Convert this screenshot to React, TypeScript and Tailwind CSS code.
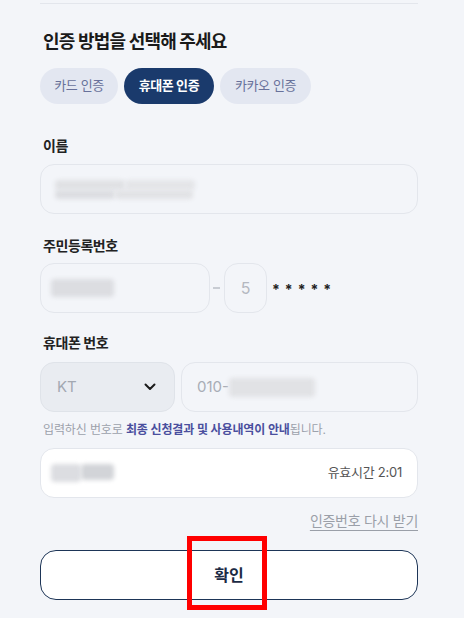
import React from "react";

const FONT = { fontFamily: '"Inter", "Noto Sans CJK KR", "Noto Sans", sans-serif' };

function Blur({ w, h, className = "" }: { w: string; h: string; className?: string }) {
  return <div className={`${w} ${h} ${className} blur-[2px] rounded-sm`} />;
}

export default function App() {
  return (
    <div style={FONT} className="relative w-[464px] h-[618px] overflow-hidden bg-[#f3f5f9] text-[#222]">
      <div className="pl-10 pr-[46px]">
        <div className="mt-[3px] h-px bg-[#e3e6ec]" />

        <h2 className="mt-[25px] text-[18px] leading-[26px] font-bold tracking-[-0.045em] text-[#1a1a1a] pl-[3px]">
          인증 방법을 선택해 주세요
        </h2>

        <div className="mt-[13px] flex gap-[6px]">
          <button className="h-9 w-[78px] rounded-full bg-[#e3e7f1] text-[13px] text-[#68719a] tracking-[-0.03em]">
            카드 인증
          </button>
          <button className="h-9 w-[90px] rounded-full bg-[#1a3a6c] text-[13px] font-bold text-white tracking-[-0.03em]">
            휴대폰 인증
          </button>
          <button className="h-9 w-[91px] rounded-full bg-[#e3e7f1] text-[13px] text-[#68719a] tracking-[-0.03em]">
            카카오 인증
          </button>
        </div>

        <div className="mt-8 pl-[3px] text-[14px] leading-5 font-bold tracking-[-0.03em]">이름</div>
        <div className="mt-2 h-[50px] rounded-[14px] border border-[#e3e6ec] flex items-center pl-[14px]">
          <div className="flex flex-col">
            <div className="flex">
              <Blur w="w-[70px]" h="h-[10px]" className="bg-[#e0e1e4]" />
              <Blur w="w-[70px]" h="h-[10px]" className="bg-[#e4e5e8]" />
            </div>
            <div className="flex">
              <Blur w="w-[60px]" h="h-[9px]" className="bg-[#dcdde1]" />
              <Blur w="w-[78px]" h="h-[9px]" className="bg-[#e1e2e5]" />
            </div>
          </div>
        </div>

        <div className="mt-[22px] pl-[3px] text-[14px] leading-5 font-bold tracking-[-0.03em]">주민등록번호</div>
        <div className="mt-[7px] flex items-center">
          <div className="w-[170px] h-[50px] rounded-[14px] border border-[#e3e6ec] flex items-center pl-[10px]">
            <Blur w="w-[63px]" h="h-[18px]" className="bg-[#dcdde1]" />
          </div>
          <div className="ml-[3px] w-[7px] h-[2px] bg-[#c8ccd3]" />
          <div className="ml-[4px] w-[43px] h-[50px] rounded-[14px] border border-[#e3e6ec] flex items-center justify-center text-[16px] text-[#b4b8c0]">
            5
          </div>
          <div className="ml-[5px] flex gap-[5px] text-[14px] font-bold text-[#222] pt-[3px]">
            <span>*</span>
            <span>*</span>
            <span>*</span>
            <span>*</span>
            <span>*</span>
          </div>
        </div>

        <div className="mt-5 pl-[3px] text-[14px] leading-5 font-bold tracking-[-0.03em]">휴대폰 번호</div>
        <div className="mt-[9px] flex gap-[6px]">
          <div className="w-[135px] h-[50px] rounded-[14px] border border-[#dfe3e9] bg-[#e9ecf1] flex items-center justify-between pl-4 pr-[18px]">
            <span className="text-[15px] text-[#a3a8b1]">KT</span>
            <svg width="12" height="8" viewBox="0 0 12 8" fill="none">
              <path d="M1.5 1.5L6 6L10.5 1.5" stroke="#1b1b1b" strokeWidth="2" strokeLinecap="round" strokeLinejoin="round" />
            </svg>
          </div>
          <div className="flex-1 h-[50px] rounded-[14px] border border-[#e3e6ec] flex items-center pl-[15px]">
            <span className="text-[15px] text-[#a8adb6]">010-</span>
            <Blur w="w-[86px]" h="h-[19px]" className="bg-[#e1e2e5]" />
          </div>
        </div>

        <p className="mt-[9px] pl-[3px] text-[12px] leading-[18px] text-[#9ca1ab] tracking-[-0.01em]">
          입력하신 번호로 <span className="font-bold text-[#4a4f9e]">최종 신청결과 및 사용내역이 안내</span>됩니다.
        </p>

        <div className="mt-[9px] h-[50px] rounded-[14px] border border-[#e3e6ec] bg-white flex items-center justify-between pl-[10px] pr-[15px]">
          <div className="flex">
            <Blur w="w-[30px]" h="h-[18px]" className="bg-[#dcdde1]" />
            <Blur w="w-[33px]" h="h-[16px]" className="bg-[#d2d4d8]" />
          </div>
          <span className="text-[13px] text-[#555] tracking-[-0.02em]">유효시간 2:01</span>
        </div>

        <div className="mt-[13px] flex justify-end">
          <button className="text-[14px] leading-5 text-[#9a9fa8] underline underline-offset-[4px] decoration-[#9a9fa8] tracking-[-0.02em]">
            인증번호 다시 받기
          </button>
        </div>

        <button className="mt-[19px] w-full h-[50px] rounded-[16px] border border-[#1d3557] bg-white text-[16px] font-bold text-[#1b2a44]">
          확인
        </button>
      </div>

      <div className="absolute left-[187px] top-[536px] w-[80px] h-[74px] border-[5px] border-[#ff0000]" />
    </div>
  );
}
